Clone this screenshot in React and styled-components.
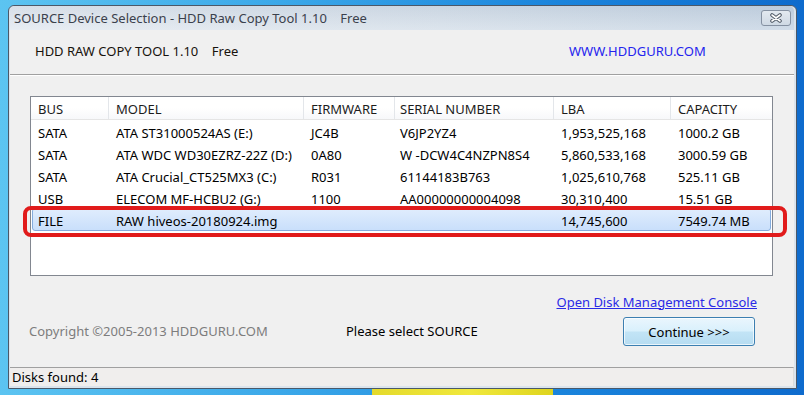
import React from 'react';
import styled, { createGlobalStyle } from 'styled-components';

const Global = createGlobalStyle`
  html, body { margin: 0; padding: 0; }
  body {
    width: 804px; height: 395px; overflow: hidden;
    font-family: "Noto Sans", "Liberation Sans", sans-serif;
    font-size: 13px;
  }
`;

const Desktop = styled.div`
  width: 804px;
  height: 395px;
  box-sizing: border-box;
  padding: 5px 7px 6px 8px;
  display: flex;
  background:
    linear-gradient(90deg, transparent 372px, #e4da2c 372px, #f0e83c 470px, #ded41e 553px, transparent 553px) left bottom / 100% 6px no-repeat,
    linear-gradient(90deg, #5cc4f1 0%, #3ba8e9 35%, #1a84dc 70%, #0e6bcd 100%);
`;

const Window = styled.div`
  flex: 1;
  box-sizing: border-box;
  display: flex;
  flex-direction: column;
  border: 1px solid #4b5868;
  border-radius: 6px 6px 0 0;
  padding: 0 2px 2px 1px;
  background: #dbe4ed;
`;

const TitleBar = styled.div`
  height: 24px;
  display: flex;
  align-items: center;
  padding-left: 4px;
  border-radius: 5px 5px 0 0;
  background:
    linear-gradient(180deg, rgba(30, 60, 100, 0.06), rgba(255, 255, 255, 0.18)),
    linear-gradient(90deg, #e3e9f0 0%, #d5dfe9 55%, #c6d4e3 100%);
`;

const Title = styled.span`
  color: #3b414c;
  white-space: pre;
  line-height: 18px;
`;

const CloseButton = styled.div`
  margin-left: auto;
  margin-right: 3px;
  align-self: flex-start;
  margin-top: 4px;
  width: 30px;
  height: 16px;
  box-sizing: border-box;
  border: 1px solid #8591a2;
  border-radius: 3px;
  background: linear-gradient(180deg, #e3e9f0, #cfd9e4);
  display: flex;
  align-items: center;
  justify-content: center;
`;

const Client = styled.div`
  flex: 1;
  display: flex;
  flex-direction: column;
  background: #f0f0f0;
`;

const Header = styled.div`
  height: 45px;
  box-sizing: border-box;
  padding: 12px 0 0 25px;
  display: grid;
  grid-template-columns: 534px auto;
  align-items: start;
  line-height: 18px;
  border-bottom: 1px solid #a0a0a0;
  box-shadow: 0 1px 0 #ffffff;
`;

const Heading = styled.span`
  color: #17120c;
  white-space: pre;
`;

const SiteLink = styled.span`
  color: #2424ee;
`;

const Main = styled.div`
  padding: 21px 21px 0 20px;
`;

const Table = styled.div`
  position: relative;
  height: 180px;
  box-sizing: border-box;
  border: 1px solid #828790;
  background: #ffffff;
`;

const HeaderRow = styled.div`
  display: grid;
  grid-template-columns: 78px 195px 91px 159px 117px 1fr;
  height: 22px;
  border-bottom: 1px solid #e5e5e5;
  background: linear-gradient(180deg, #ffffff 0%, #ffffff 50%, #f7f8fa 100%);
`;

const HeadCell = styled.div`
  padding-left: ${p => p.$pad}px;
  padding-top: 2px;
  line-height: 20px;
  color: #1c1c1c;
  border-right: 1px solid #e3e6ea;
  white-space: nowrap;
  &:last-child { border-right: none; }
`;

const Rows = styled.div`
  padding: 0 1px;
`;

const Row = styled.div`
  display: grid;
  grid-template-columns: 76px 195px 91px 159px 117px 1fr;
  height: ${p => (p.$selected ? 23 : 22)}px;
  box-sizing: border-box;
  border: 1px solid ${p => (p.$selected ? '#84acdd' : 'transparent')};
  border-radius: 3px;
  background: ${p => (p.$selected ? 'linear-gradient(180deg, #e0edfd 0%, #c9dffb 100%)' : 'transparent')};
`;

const Cell = styled.div`
  padding-left: ${p => p.$pad}px;
  line-height: 18px;
  padding-top: 3px;
  color: #000000;
  white-space: nowrap;
`;

const Highlight = styled.div`
  position: absolute;
  left: -8px;
  top: 109px;
  width: 764px;
  height: 31px;
  box-sizing: border-box;
  border: 4.5px solid #e11b1b;
  border-radius: 8px;
  pointer-events: none;
`;

const Footer = styled.div`
  display: grid;
  grid-template-columns: 317px 1fr 132px;
  grid-template-rows: 17px 29px;
  row-gap: 7px;
  padding: 17px 39px 0 19px;
  align-items: center;
`;

const DiskLink = styled.span`
  grid-column: 2 / 4;
  justify-self: end;
  margin-right: -2px;
  margin-top: 1px;
  color: #2a2ae6;
  text-decoration: underline;
  line-height: 17px;
`;

const Note = styled.span`
  color: ${p => p.$color};
  line-height: 17px;
  margin-bottom: 1px;
  white-space: nowrap;
`;

const Button = styled.button`
  height: 29px;
  box-sizing: border-box;
  border: 1px solid #3c7fb1;
  border-radius: 3px;
  box-shadow: inset 0 0 0 1px rgba(255, 255, 255, 0.7);
  background: linear-gradient(180deg, #eaf6fd 0%, #d9f0fc 48%, #c2e4f6 52%, #b6dcf1 100%);
  font-family: inherit;
  font-size: 13px;
  color: #000;
  padding: 0;
`;

const StatusBar = styled.div`
  margin-top: auto;
  height: 19px;
  box-sizing: border-box;
  border-top: 1px solid #a0a0a0;
  border-right: 1px solid #dcdcdc;
  background: #f0eeed;
  padding-left: 2px;
  line-height: 18px;
  color: #000;
`;

const columns = [
  { key: 'bus', label: 'BUS', hpad: 7, pad: 5 },
  { key: 'model', label: 'MODEL', hpad: 7, pad: 7 },
  { key: 'fw', label: 'FIRMWARE', hpad: 7, pad: 7 },
  { key: 'serial', label: 'SERIAL NUMBER', hpad: 5, pad: 5 },
  { key: 'lba', label: 'LBA', hpad: 7, pad: 7 },
  { key: 'cap', label: 'CAPACITY', hpad: 7, pad: 7 },
];

const disks = [
  { bus: 'SATA', model: 'ATA ST31000524AS (E:)', fw: 'JC4B', serial: 'V6JP2YZ4', lba: '1,953,525,168', cap: '1000.2 GB' },
  { bus: 'SATA', model: 'ATA WDC WD30EZRZ-22Z (D:)', fw: '0A80', serial: 'W -DCW4C4NZPN8S4', lba: '5,860,533,168', cap: '3000.59 GB' },
  { bus: 'SATA', model: 'ATA Crucial_CT525MX3 (C:)', fw: 'R031', serial: '61144183B763', lba: '1,025,610,768', cap: '525.11 GB' },
  { bus: 'USB', model: 'ELECOM MF-HCBU2 (G:)', fw: '1100', serial: 'AA00000000004098', lba: '30,310,400', cap: '15.51 GB' },
  { bus: 'FILE', model: 'RAW hiveos-20180924.img', fw: '', serial: '', lba: '14,745,600', cap: '7549.74 MB', selected: true },
];

const CloseIcon = () => (
  <svg width="14" height="10" viewBox="0 0 14 10">
    <path d="M3 2 L11 8 M11 2 L3 8" stroke="#4f5966" strokeWidth="3.6" strokeLinecap="round" fill="none" />
    <path d="M3 2 L11 8 M11 2 L3 8" stroke="#ffffff" strokeWidth="1.6" strokeLinecap="round" fill="none" />
  </svg>
);

export default function App() {
  return (
    <>
      <Global />
      <Desktop>
        <Window>
          <TitleBar>
            <Title>{'SOURCE Device Selection - HDD Raw Copy Tool 1.10    Free'}</Title>
            <CloseButton><CloseIcon /></CloseButton>
          </TitleBar>
          <Client>
            <Header>
              <Heading>{'HDD RAW COPY TOOL 1.10    Free'}</Heading>
              <SiteLink>WWW.HDDGURU.COM</SiteLink>
            </Header>
            <Main>
              <Table>
                <HeaderRow>
                  {columns.map(c => (
                    <HeadCell key={c.key} $pad={c.hpad}>{c.label}</HeadCell>
                  ))}
                </HeaderRow>
                <Rows>
                  {disks.map((d, i) => (
                    <Row key={i} $selected={d.selected}>
                      {columns.map(c => (
                        <Cell key={c.key} $pad={c.pad}>{d[c.key]}</Cell>
                      ))}
                    </Row>
                  ))}
                </Rows>
                <Highlight />
              </Table>
            </Main>
            <Footer>
              <DiskLink>Open Disk Management Console</DiskLink>
              <Note $color="#7d7d7d">Copyright ©2005-2013 HDDGURU.COM</Note>
              <Note $color="#000000">Please select SOURCE</Note>
              <Button>Continue &gt;&gt;&gt;</Button>
            </Footer>
            <StatusBar>Disks found: 4</StatusBar>
          </Client>
        </Window>
      </Desktop>
    </>
  );
}
